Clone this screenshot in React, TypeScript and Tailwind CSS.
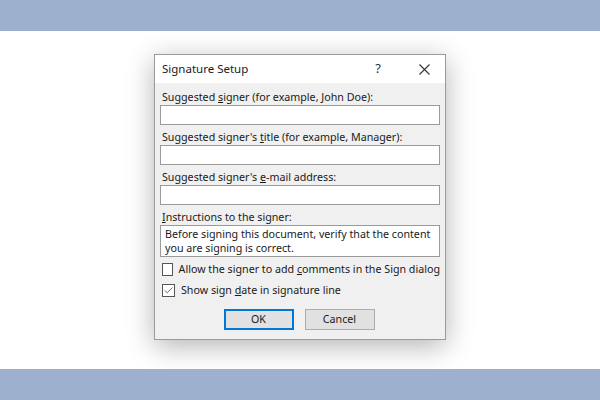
import { Check } from "lucide-react";

const FIELDS = [
  { before: "Suggested ", key: "s", after: "igner (for example, John Doe):" },
  { before: "Suggested signer's ", key: "t", after: "itle (for example, Manager):" },
  { before: "Suggested signer's ", key: "e", after: "-mail address:" },
];

function Label({ before, k, after }: { before: string; k: string; after: string }) {
  return (
    <p className="h-[15px] leading-[15px] text-[#1a1a1a] pl-[2px] whitespace-nowrap">
      {before}
      <span className="underline underline-offset-[1px]">{k}</span>
      {after}
    </p>
  );
}

function CheckRow({ checked, children }: { checked?: boolean; children: React.ReactNode }) {
  return (
    <div className="flex items-center gap-[6px] h-[15px]">
      <span className="w-[13px] h-[13px] border border-[#555] bg-white flex items-center justify-center">
        {checked && <Check size={11} strokeWidth={1.6} className="text-[#333]" />}
      </span>
      <span className="leading-[15px] text-[#1a1a1a] whitespace-nowrap">{children}</span>
    </div>
  );
}

export default function App() {
  return (
    <div className="w-[600px] h-[400px] flex flex-col bg-white font-['Noto_Sans',sans-serif] text-[10.7px]">
      <div className="h-[31px] bg-[#9db1ce]" />

      <div className="flex-1 flex justify-center pt-[23px]">
        <div className="w-[292px] h-[286px] border border-[#9a9a9a] bg-[#f0f0f0] shadow-[0_6px_26px_rgba(0,0,0,0.3)] flex flex-col">
          {/* Title bar */}
          <div className="h-[28px] bg-white flex items-center pl-[7px]">
            <span className="text-[11.5px] text-[#1a1a1a]">Signature Setup</span>
            <span className="ml-auto text-[13px] text-[#333] w-[12px] text-center">?</span>
            <svg width="11" height="11" viewBox="0 0 11 11" className="ml-[35px] mr-[15px]">
              <path d="M0.5 0.5 L10.5 10.5 M10.5 0.5 L0.5 10.5" stroke="#333" strokeWidth="1.1" />
            </svg>
          </div>

          <div className="px-[5px] pt-[7px] flex flex-col">
            {FIELDS.map((f, i) => (
              <div key={i} className={i === 0 ? "" : "mt-[5px]"}>
                <Label before={f.before} k={f.key} after={f.after} />
                <div className="h-[20px] border border-[#9a9a9a] bg-white" />
              </div>
            ))}

            <div className="mt-[5px]">
              <Label before="" k="I" after="nstructions to the signer:" />
              <div className="h-[32px] border border-[#9a9a9a] bg-white px-[4px] py-[1px] leading-[14px] text-[#1a1a1a] whitespace-nowrap">
                Before signing this document, verify that the content
                <br />
                you are signing is correct.
              </div>
            </div>

            <div className="mt-[5px] flex flex-col gap-[6px] pl-[2px]">
              <CheckRow>
                Allow the signer to add <span className="underline">c</span>omments in the Sign dialog
              </CheckRow>
              <CheckRow checked>
                Show sign <span className="underline">d</span>ate in signature line
              </CheckRow>
            </div>

            <div className="mt-[11px] flex justify-center gap-[11px] pr-[2px]">
              <button className="w-[70px] h-[21px] border-2 border-[#0078d7] bg-[#e1e1e1] text-[#1a1a1a] leading-none">
                OK
              </button>
              <button className="w-[70px] h-[21px] border border-[#adadad] bg-[#e1e1e1] text-[#1a1a1a] leading-none">
                Cancel
              </button>
            </div>
          </div>
        </div>
      </div>

      <div className="h-[31px] bg-[#9db1ce]" />
    </div>
  );
}
